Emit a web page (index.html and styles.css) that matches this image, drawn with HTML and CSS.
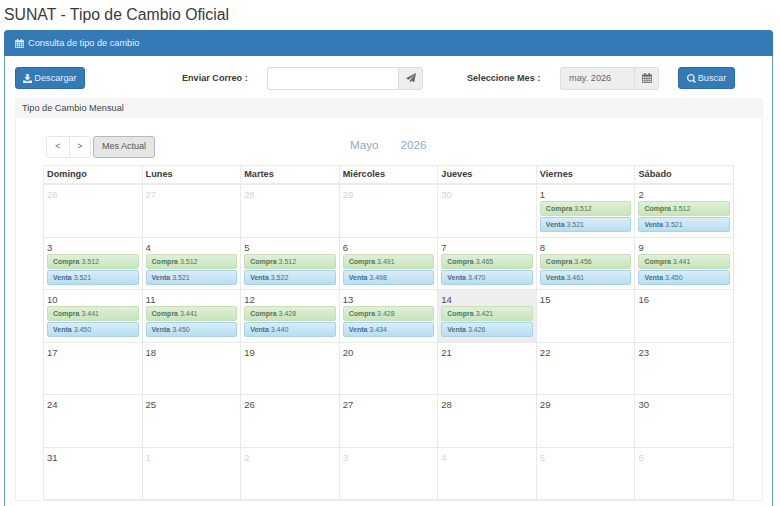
FILE: index.html
```html
<!DOCTYPE html>
<html lang="es">
<head>
<meta charset="utf-8">
<title>SUNAT - Tipo de Cambio Oficial</title>
<link rel="stylesheet" href="styles.css">
</head>
<body>
<svg class="defs" width="0" height="0" aria-hidden="true">
  <symbol id="i-cal" viewBox="0 0 14 14"><path fill="currentColor" d="M3 0h2v2h4V0h2v2h2a1 1 0 0 1 1 1v10a1 1 0 0 1-1 1H1a1 1 0 0 1-1-1V3a1 1 0 0 1 1-1h2V0zM1 5v2h2.500V5H1zm3.500 0v2h2V5h-2zm3 0v2h2V5h-2zm3 0v2H13V5h-2.500zM1 8v2h2.500V8H1zm3.500 0v2h2V8h-2zm3 0v2h2V8h-2zm3 0v2H13V8h-2.500zM1 11v2h2.500v-2H1zm3.500 0v2h2v-2h-2zm3 0v2h2v-2h-2zm3 0v2H13v-2h-2.500z"/></symbol>
</svg>
<h1 class="title">SUNAT - Tipo de Cambio Oficial</h1>
<section class="panel">
  <header class="panel-head">
    <svg class="ico"><use href="#i-cal"/></svg>
    <span>Consulta de tipo de cambio</span>
  </header>
  <div class="panel-body">
    <div class="toolbar">
      <button class="btn btn-primary btn-down">
        <svg class="ico" viewBox="0 0 14 14"><path fill="currentColor" d="M5 0h4v5h3L7 10 2 5h3V0zM0 10h3.500L7 12l3.500-2H14v4H0v-4z"/></svg>Descargar
      </button>
      <label class="lbl lbl-mail">Enviar Correo :</label>
      <div class="group group-mail">
        <div class="field"></div>
        <span class="addon addon-mail"><svg class="ico-dark" viewBox="0 0 14 14"><path fill="currentColor" d="M14 0 11.500 13 7.500 11 5.500 14V10.500L12 2.500 3.500 9.500 0 7.500 14 0z"/></svg></span>
      </div>
      <label class="lbl lbl-mes">Seleccione Mes :</label>
      <div class="group group-mes">
        <div class="field field-off">may. 2026</div>
        <span class="addon addon-cal"><svg class="ico-dark"><use href="#i-cal"/></svg></span>
      </div>
      <button class="btn btn-primary btn-find">
        <svg class="ico" viewBox="0 0 14 14"><path fill="currentColor" fill-rule="evenodd" d="M6 0a6 6 0 0 1 4.900 9.400l3 3-1.600 1.600-3-3A6 6 0 1 1 6 0zm0 2a4 4 0 1 0 0 8 4 4 0 0 0 0-8z"/></svg>Buscar
      </button>
    </div>
    <section class="inner">
      <header class="inner-head">Tipo de Cambio Mensual</header>
      <div class="inner-body">
        <div class="cal-bar">
          <div class="nav">
            <span class="nav-b">&lt;</span><span class="nav-b nav-r">&gt;</span>
          </div>
          <span class="today">Mes Actual</span>
          <div class="cal-title"><span>Mayo</span><span>2026</span></div>
        </div>
        <div class="cal">
          <div class="dow">Domingo</div><div class="dow">Lunes</div><div class="dow">Martes</div><div class="dow">Miércoles</div><div class="dow">Jueves</div><div class="dow">Viernes</div><div class="dow">Sábado</div>

          <div class="day off">26</div><div class="day off">27</div><div class="day off">28</div><div class="day off">29</div><div class="day off">30</div>
          <div class="day">1<p class="ev buy"><b>Compra</b> 3.512</p><p class="ev sell"><b>Venta</b> 3.521</p></div>
          <div class="day">2<p class="ev buy"><b>Compra</b> 3.512</p><p class="ev sell"><b>Venta</b> 3.521</p></div>

          <div class="day">3<p class="ev buy"><b>Compra</b> 3.512</p><p class="ev sell"><b>Venta</b> 3.521</p></div>
          <div class="day">4<p class="ev buy"><b>Compra</b> 3.512</p><p class="ev sell"><b>Venta</b> 3.521</p></div>
          <div class="day">5<p class="ev buy"><b>Compra</b> 3.512</p><p class="ev sell"><b>Venta</b> 3.522</p></div>
          <div class="day">6<p class="ev buy"><b>Compra</b> 3.491</p><p class="ev sell"><b>Venta</b> 3.498</p></div>
          <div class="day">7<p class="ev buy"><b>Compra</b> 3.465</p><p class="ev sell"><b>Venta</b> 3.470</p></div>
          <div class="day">8<p class="ev buy"><b>Compra</b> 3.456</p><p class="ev sell"><b>Venta</b> 3.461</p></div>
          <div class="day">9<p class="ev buy"><b>Compra</b> 3.441</p><p class="ev sell"><b>Venta</b> 3.450</p></div>

          <div class="day">10<p class="ev buy"><b>Compra</b> 3.441</p><p class="ev sell"><b>Venta</b> 3.450</p></div>
          <div class="day">11<p class="ev buy"><b>Compra</b> 3.441</p><p class="ev sell"><b>Venta</b> 3.450</p></div>
          <div class="day">12<p class="ev buy"><b>Compra</b> 3.428</p><p class="ev sell"><b>Venta</b> 3.440</p></div>
          <div class="day">13<p class="ev buy"><b>Compra</b> 3.428</p><p class="ev sell"><b>Venta</b> 3.434</p></div>
          <div class="day now">14<p class="ev buy"><b>Compra</b> 3.421</p><p class="ev sell"><b>Venta</b> 3.426</p></div>
          <div class="day">15</div><div class="day">16</div>

          <div class="day">17</div><div class="day">18</div><div class="day">19</div><div class="day">20</div><div class="day">21</div><div class="day">22</div><div class="day">23</div>
          <div class="day">24</div><div class="day">25</div><div class="day">26</div><div class="day">27</div><div class="day">28</div><div class="day">29</div><div class="day">30</div>
          <div class="day">31</div><div class="day off">1</div><div class="day off">2</div><div class="day off">3</div><div class="day off">4</div><div class="day off">5</div><div class="day off">6</div>
        </div>
      </div>
    </section>
  </div>
</section>
</body>
</html>
```

FILE: styles.css
```css
* { box-sizing: border-box; }
html, body { margin: 0; padding: 0; height: 506px; overflow: hidden; background: #fff; }
body { font-family: "Liberation Sans", Arial, sans-serif; color: #333; font-size: 9px; }
.defs { position: absolute; }
.title { margin: 0; padding: 5px 0 0 4px; height: 30px; font-size: 15.800px; line-height: 19px; font-weight: 400; color: #3a3a3a; }
.panel { margin: 0 7px 0 4px; height: 500px; border: 1px solid #6f9cc6; border-radius: 4px 4px 0 0; }
.panel-head { display: flex; align-items: center; gap: 4px; height: 26px; margin: -1px -1px 0; padding: 0 0 0 11px; background: #337ab7; color: #e8f0f7; font-size: 9.200px; border-radius: 4px 4px 0 0; }
.ico { width: 9px; height: 9px; flex: none; }
.ico-dark { width: 10px; height: 10px; color: #666; display: block; }
.panel-body { padding: 11px 10px 0; }
.toolbar { display: flex; align-items: center; height: 22px; }
.btn { display: flex; align-items: center; justify-content: center; gap: 2px; height: 22px; padding: 0; border: 1px solid #2e6da4; border-radius: 3px; font: 9.200px "Liberation Sans", Arial, sans-serif; color: #e8f0f7; }
.btn-primary { background: #337ab7; }
.btn-down { width: 70px; }
.btn-find { width: 57px; margin-left: 19px; }
.lbl { font-weight: 700; font-size: 9.100px; color: #3a3a3a; white-space: nowrap; }
.lbl-mail { margin-left: 97px; width: 85px; }
.lbl-mes { margin-left: 44px; width: 93px; }
.group { display: flex; height: 23px; }
.group-mail { width: 156px; }
.group-mes { width: 99px; }
.field { flex: 1; height: 23px; border: 1px solid #ddd; border-right: 0; border-radius: 3px 0 0 3px; background: #fff; font-size: 9.200px; color: #666; line-height: 21px; padding-left: 8px; }
.field-off { background: #eee; }
.addon { display: flex; align-items: center; justify-content: center; flex: none; width: 25px; border: 1px solid #ddd; border-radius: 0 3px 3px 0; background: #eee; }
.inner { margin: 9px -1px 0 0; border: 1px solid #f0f0f0; border-radius: 3px 3px 0 0; }
.inner-head { height: 20px; margin: -1px -1px 0; padding-left: 7px; line-height: 20px; background: #f5f5f5; font-size: 9.200px; color: #444; }
.inner-body { padding: 17px 28px 0 27px; }
.cal-bar { position: relative; display: flex; align-items: center; height: 23px; margin: 0 0 7px 3px; }
.nav { display: flex; height: 22px; border: 1px solid #e6e6e6; border-radius: 3px; }
.nav-b { width: 21.500px; text-align: center; line-height: 19px; font-size: 8.500px; color: #666; }
.nav-r { border-left: 1px solid #e6e6e6; }
.today { display: block; width: 62px; height: 22px; margin-left: 2px; border: 1px solid #b8b8b8; border-radius: 3px; background: #e6e6e6; text-align: center; line-height: 19px; font-size: 9px; color: #555; }
.cal-title { position: absolute; left: 304px; top: 2px; display: flex; gap: 22px; font-size: 11.700px; line-height: 15px; color: #8fabc7; }
.cal { display: grid; grid-template-columns: repeat(7, 1fr); grid-template-rows: 20px repeat(6, 52.500px); width: 691px; border-right: 1px solid #e6e6e6; }
.dow { border: solid #ebebeb; border-width: 1px 0 2px 1px; padding: 2px 0 0 3px; font-size: 9.200px; line-height: 13px; font-weight: 700; color: #3a3a3a; }
.day { border: solid #e9e9e9; border-width: 0 0 1px 1px; padding: 3px 3px 0 3px; font-size: 9.500px; line-height: 13px; color: #4d4d4d; }
.off { color: #d4d4d4; }
.now { background: #eee; }
.ev { margin: 0 0 1px; height: 15px; padding-left: 5px; border: 1px solid; border-radius: 2px; font-size: 7px; line-height: 13px; }
.ev b { font-weight: 700; }
.buy { background: #d6e9c6; background-image: linear-gradient(#dff0d8, #c8e5bc); border-color: #c8e0b8; color: #55755a; }
.sell { background: #c4e3f3; background-image: linear-gradient(#d9edf7, #b9def0); border-color: #a8d4ea; color: #446f8e; }
```
